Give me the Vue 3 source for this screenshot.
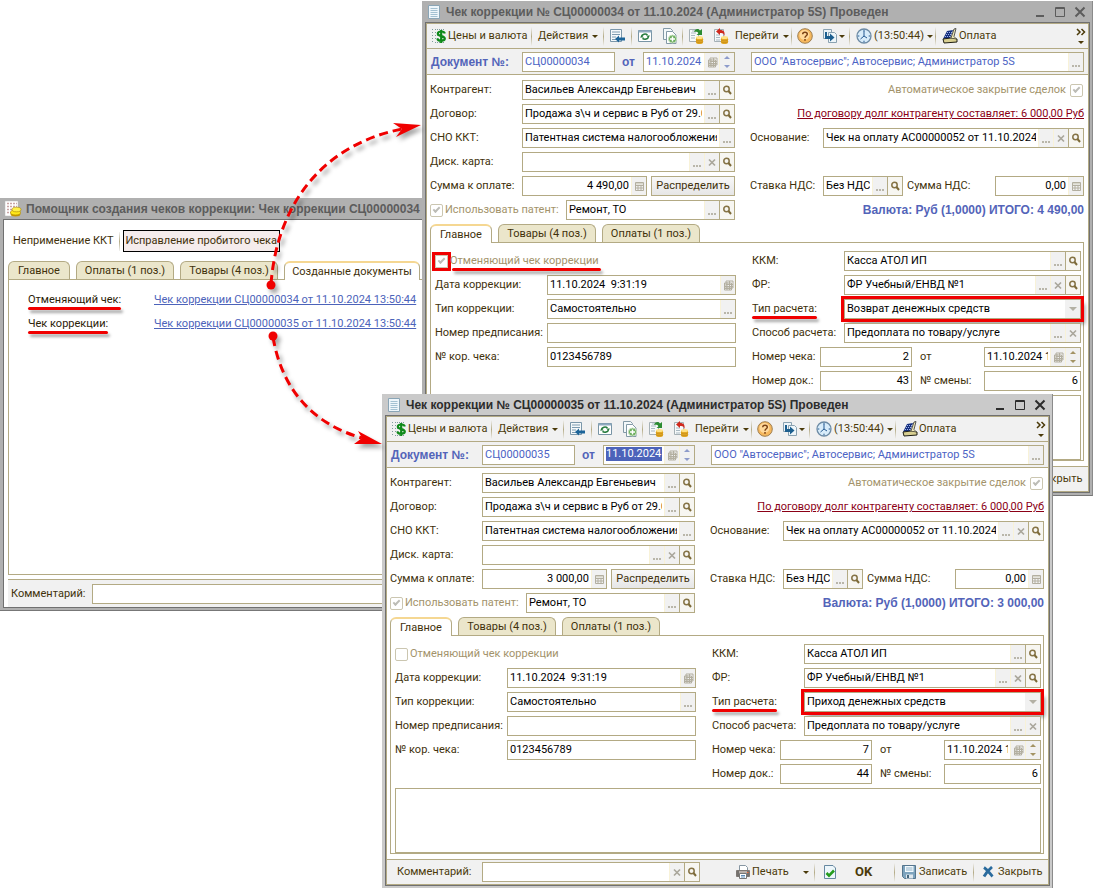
<script setup>
const docs = [
  {
    id: 'd34', number: 'СЦ00000034', active: false, sum: '4 490,00', cancelling: true,
    kind: 'Возврат денежных средств', check: '2', docNo: '43',
  },
  {
    id: 'd35', number: 'СЦ00000035', active: true, sum: '3 000,00', cancelling: false,
    kind: 'Приход денежных средств', check: '7', docNo: '44',
  },
]

const partyRows = [
  { key: 'party', label: 'Контрагент:', value: 'Васильев Александр Евгеньевич', buttons: ['dots', 'find'] },
  { key: 'contract', label: 'Договор:', value: 'Продажа з\\ч и сервис в Руб от 29.01.2024', buttons: ['dots', 'find'] },
  { key: 'tax', label: 'СНО ККТ:', value: 'Патентная система налогообложения', buttons: ['dots'] },
  { key: 'card', label: 'Диск. карта:', value: '', buttons: ['dots', 'clear', 'find'] },
]

const correctionRows = [
  { key: 'cdate', label: 'Дата коррекции:', value: '11.10.2024  9:31:19', buttons: ['cal'] },
  { key: 'ctype', label: 'Тип коррекции:', value: 'Самостоятельно', buttons: ['dots'] },
  { key: 'order', label: 'Номер предписания:', value: '', buttons: [] },
  { key: 'cnum', label: '№ кор. чека:', value: '0123456789', buttons: [] },
]

const registerRows = (doc) => [
  { key: 'kkm', label: 'ККМ:', value: 'Касса АТОЛ ИП', buttons: ['dots', 'find'] },
  { key: 'fr', label: 'ФР:', value: 'ФР Учебный/ЕНВД №1', buttons: ['dots', 'clear', 'find'] },
  { key: 'kind', label: 'Тип расчета:', value: doc.kind, select: true },
  { key: 'way', label: 'Способ расчета:', value: 'Предоплата по товару/услуге', buttons: ['dots', 'clear'] },
]

const names = { dots: 'Выбрать', find: 'Открыть', clear: 'Очистить', cal: 'Календарь', calc: 'Калькулятор' }
const docTabs = ['Главное', 'Товары (4 поз.)', 'Оплаты (1 поз.)']
const helperTabs = ['Главное', 'Оплаты (1 поз.)', 'Товары (4 поз.)', 'Созданные документы']
const created = [
  { label: 'Отменяющий чек:', text: 'Чек коррекции СЦ00000034 от 11.10.2024 13:50:44' },
  { label: 'Чек коррекции:', text: 'Чек коррекции СЦ00000035 от 11.10.2024 13:50:44' },
]
</script>

<template>
  <main class="desk">
    <svg class="sprite" aria-hidden="true">
      <symbol id="i-dots" viewBox="0 0 14 18"><path d="M3 12h2v2H3zM6 12h2v2H6zM9 12h2v2H9z" fill="#b9b6aa" /></symbol>
      <symbol id="i-clear" viewBox="0 0 14 18"><path d="M4 6.500l6 6M10 6.500l-6 6" stroke="#aaa79c" stroke-width="1.700" /></symbol>
      <symbol id="i-find" viewBox="0 0 14 18"><circle cx="6.500" cy="8" r="2.700" fill="none" stroke="#857345" stroke-width="1.500" /><path d="M8.500 10l2.500 3" stroke="#7d6a38" stroke-width="2" /></symbol>
      <symbol id="i-cal" viewBox="0 0 14 18"><path d="M5 5h7v7H5zM3.500 7h7v7h-7zM5 8.500h7M4 10.500h8M4 12.500h7M6 6v8M8.500 5v9" fill="none" stroke="#b3afa0" stroke-width="1" /></symbol>
      <symbol id="i-calc" viewBox="0 0 14 18"><path d="M3.500 5.500h8v8h-8zM3.500 8.500h8M3.500 11h8M6 8.500v5M9 8.500v5" fill="none" stroke="#b3afa0" stroke-width="1" /><path d="M4 6h7v1.500H4z" fill="#d8d6ca" /></symbol>
      <symbol id="i-doc" viewBox="0 0 16 16"><path d="M2.500 1.500h11v13h-11z" fill="#eef6fb" stroke="#8aa5b6" /><path d="M4.500 4.500h7M4.500 6.500h7M4.500 8.500h7M4.500 10.500h7M4.500 12.500h7" stroke="#a3c1d2" /></symbol>
      <symbol id="i-helper" viewBox="0 0 18 18"><path d="M1 1h13v15H1z" fill="#fff" stroke="#bbb" stroke-width=".5" /><path d="M3 3.500h10M3 6.500h10M3 9.500h6M3 12.500h4" stroke="#c9a5a5" stroke-width="1.500" stroke-dasharray="2 1" /><ellipse cx="11.500" cy="14" rx="5" ry="2.500" fill="#c79a00" /><ellipse cx="11.500" cy="12.500" rx="5" ry="2.500" fill="#ffe81a" stroke="#a68000" stroke-width=".6" /><ellipse cx="12.500" cy="9.500" rx="4.500" ry="2.300" fill="#fff14a" stroke="#a68000" stroke-width=".6" /></symbol>
      <symbol id="i-price" viewBox="0 0 16 16"><path d="M1 1.500h2M1 4.500h2M1 7.500h2M1 10.500h2M1 13.500h2M4 1.500h10M4 4.500h3M4 7.500h3M4 10.500h3M4 14.500h10" stroke="#7f9c9c" stroke-dasharray="1 1" /><path d="M13.800 5.500C13.500 3.800 12 3.500 10.200 3.500 8 3.500 6.800 4.200 6.800 5.800 6.800 8.800 13.800 7.400 13.800 10.600 13.800 12 12.200 12.800 10.200 12.800 8 12.800 6.700 12.200 6.400 10.500M10.200 2v13" fill="none" stroke="#0f8a1a" stroke-width="2.200" /></symbol>
      <symbol id="i-goto" viewBox="0 0 16 16"><path d="M1.500 1.500h11v12h-11z" fill="#f5f9fb" stroke="#7b97aa" /><path d="M3 4h8M3 6.500h8M3 9h4M3 11.500h4" stroke="#7d9bb0" /><path d="M6 11l4-3.500v2h6v3h-6v2z" fill="#1c6499" /></symbol>
      <symbol id="i-refresh" viewBox="0 0 16 16"><path d="M1.500 2.500h13v11h-13z" fill="#fff" stroke="#7894a5" /><path d="M1.500 2.500h13v2h-13z" fill="#8fabc0" /><path d="M4.500 8.500a3.500 3 0 0 1 6-1.500M11.500 8.500a3.500 3 0 0 1-6 1.800" fill="none" stroke="#247a3c" stroke-width="1.600" /><path d="M9 7.500h4L11.500 9.500zM7 9.500H3L4.500 7.500z" fill="#247a3c" /></symbol>
      <symbol id="i-copy" viewBox="0 0 16 16"><path d="M1.500 .500h7l2 2v9h-9z" fill="#f4f8fa" stroke="#8399a6" /><path d="M4.500 3.500h6l3.500 3.500v8.500h-9.500z" fill="#fff" stroke="#8399a6" /><circle cx="10.500" cy="11" r="4" fill="#67ab58" stroke="#c6e0be" /><path d="M10.500 8.500v5M8 11h5" stroke="#fff" stroke-width="1.500" /></symbol>
      <symbol id="i-post" viewBox="0 0 16 16"><path d="M1.500 1.500h9v12h-9z" fill="#f6f9fa" stroke="#a5b0b5" /><path d="M3 5h5M3 7.500h4M3 10h4M4 3h3" stroke="#a9b9c2" /><path d="M6 4c1-3 4-4 6-1.500L14 1v6H8.500l2-1.800C9.500 3.800 8 3.500 6 4z" fill="#2b8b31" /><path d="M8 9.500v5c0 2 7 2 7 0v-5z" fill="#e4aa25" /><ellipse cx="11.500" cy="9.500" rx="3.500" ry="1.500" fill="#ffe285" /><path d="M8 11.500c0 1.800 7 1.800 7 0M8 13.500c0 1.500 7 1.500 7 0" fill="none" stroke="#b98010" stroke-width=".6" /></symbol>
      <symbol id="i-unpost" viewBox="0 0 16 16"><path d="M1.500 1.500h9v12h-9z" fill="#f6f9fa" stroke="#a5b0b5" /><path d="M3 7h4M3 9.500h4M3 12h4" stroke="#a9b9c2" /><path d="M3 3.500L7 0v2c4 0 5 2 4.500 6C10.500 5 9.500 4.800 7 5v2z" fill="#cf281c" /><path d="M8 9.500v5c0 2 7 2 7 0v-5z" fill="#e4aa25" /><ellipse cx="11.500" cy="9.500" rx="3.500" ry="1.500" fill="#ffe285" /><path d="M8 11.500c0 1.800 7 1.800 7 0M8 13.500c0 1.500 7 1.500 7 0" fill="none" stroke="#b98010" stroke-width=".6" /></symbol>
      <symbol id="i-help" viewBox="0 0 16 16"><circle cx="8" cy="8" r="7.300" fill="#f6b85e" stroke="#9f7f50" /><circle cx="7.500" cy="7" r="5" fill="#ffd99b" /><path d="M5.700 6.200C5.700 3.500 10.300 3.500 10.300 6.200 10.300 7.800 8 7.800 8 9.800M8 11v1.700" fill="none" stroke="#7b4215" stroke-width="1.500" /></symbol>
      <symbol id="i-based" viewBox="0 0 16 16"><path d="M1.500 1.500h8v9h-8z" fill="#eef4f8" stroke="#8aa2b1" /><path d="M6.500 4.500h6l2 2v8h-8z" fill="#eef6fa" stroke="#8aa2b1" /><path d="M3 4h2v4h3V5.500l4.500 4L8 13.500v-2.500H3z" fill="#1d5f8f" /></symbol>
      <symbol id="i-clock" viewBox="0 0 16 16"><circle cx="8" cy="8" r="7" fill="#d8ecfa" stroke="#6d8ba5" stroke-width="1.300" /><path d="M8 3v5l3 2M8 1.800v1.500M8 12.700v1.500M1.800 8h1.500M12.700 8h1.500M8 8l-3.500 3" fill="none" stroke="#265a91" /></symbol>
      <symbol id="i-pay" viewBox="0 0 16 16"><path d="M5 3l6-1-3 8-7 1z" fill="#16307e" /><path d="M5 4.500h5M4 6.500h5M3 8.500h5" stroke="#9db1ec" stroke-dasharray="1 1" /><path d="M1 11l8-1 6 1v3l-13 1z" fill="#d8cf91" stroke="#1e1e14" /><path d="M9 10l3-9 2-.5-2 8 2 2" fill="#eee7b8" stroke="#333" stroke-width=".8" /></symbol>
      <symbol id="i-print" viewBox="0 0 16 16"><path d="M4.500 1.500h6l2 2v4h-8z" fill="#fff" stroke="#8796a2" /><path d="M1.500 6.500h13v6h-13z" fill="#b8b0aa" stroke="#7d7773" /><path d="M2 7h2v5H2zM12 7h2v5h-2z" fill="#75716e" /><path d="M4.500 9.500h7v5h-7z" fill="#fff" stroke="#767676" /><path d="M6 11.500h4M6 13h4" stroke="#5e8db8" /><path d="M12 8h1.500v1H12z" fill="#f06b3e" /></symbol>
      <symbol id="i-ok" viewBox="0 0 16 16"><path d="M2.500 1.500h8.500l2.500 2.500v10.500h-11z" fill="#edf6fb" stroke="#6688a0" /><path d="M4.500 9l2.500 2.700 5-5.200" fill="none" stroke="#259c1e" stroke-width="2.600" /></symbol>
      <symbol id="i-save" viewBox="0 0 16 16"><path d="M1.500 1.500h13v13h-11l-2-2z" fill="#7da3bd" stroke="#54758d" /><path d="M4 2h8.500v6H4z" fill="#f3fafe" /><path d="M5 4h6.500M5 6h6.500" stroke="#8fb1c7" /><path d="M5 10.500h7v4H5z" fill="#dfe7ec" /><path d="M6 11h2v3H6z" fill="#45667c" /></symbol>
      <symbol id="i-close" viewBox="0 0 12 12"><path d="M2 1.500c3 2 6 6 8.500 9M10 1c-3 2.500-6 6-8 9.500" fill="none" stroke="#2a6b9d" stroke-width="2.800" /></symbol>
    </svg>

    <section class="win helper" aria-label="Помощник создания чеков коррекции">
      <header class="title">
        <svg class="ico18"><use href="#i-helper" /></svg>
        <h2>Помощник создания чеков коррекции: Чек коррекции СЦ00000034</h2>
      </header>
      <div class="helper-frame">
        <div class="modes">
          <button type="button" class="mode">Неприменение ККТ</button>
          <i class="sep"></i>
          <button type="button" class="mode pressed">Исправление пробитого чека</button>
        </div>
        <nav class="tabs">
          <button v-for="(t, i) in helperTabs" :key="t" type="button" class="tab" :class="{ on: i === 3, short: i === 0, long: i === 3 }">{{ t }}</button>
        </nav>
        <div class="created">
          <p v-for="c in created" :key="c.label">
            <span><b class="marked">{{ c.label }}</b></span>
            <a href="#">{{ c.text }}</a>
          </p>
        </div>
        <footer class="helper-foot">
          <label for="helper-note">Комментарий:</label>
          <span class="field"><input id="helper-note" type="text" /></span>
        </footer>
      </div>
    </section>

    <section v-for="doc in docs" :key="doc.id" class="win doc" :class="[doc.id, { active: doc.active }]">
      <header class="title">
        <svg class="ico"><use href="#i-doc" /></svg>
        <h2>Чек коррекции № {{ doc.number }} от 11.10.2024 (Администратор 5S) Проведен</h2>
        <div class="wbtns">
          <button type="button" aria-label="Свернуть"><svg viewBox="0 0 12 12"><path d="M2 10h8" /></svg></button>
          <button type="button" aria-label="Развернуть"><svg viewBox="0 0 12 12"><path d="M1.500 1.500h9v9h-9zM1 2.500h10" class="thin" /></svg></button>
          <button type="button" aria-label="Закрыть"><svg viewBox="0 0 12 12"><path d="M1.500 1.500l9 9M10.500 1.500l-9 9" /></svg></button>
        </div>
      </header>

      <div class="frame">
        <div class="tools">
          <button type="button" class="tool prices"><svg class="ico"><use href="#i-price" /></svg>Цены и валюта</button>
          <i class="sep"></i>
          <button type="button" class="tool acts">Действия<i class="caret"></i></button>
          <i class="sep"></i>
          <button type="button" class="tool pic wide" aria-label="Найти в списке"><svg class="ico"><use href="#i-goto" /></svg></button>
          <i class="sep"></i>
          <button type="button" class="tool pic" aria-label="Обновить"><svg class="ico"><use href="#i-refresh" /></svg></button>
          <button type="button" class="tool pic" aria-label="Скопировать"><svg class="ico"><use href="#i-copy" /></svg></button>
          <i class="sep"></i>
          <button type="button" class="tool pic" aria-label="Провести"><svg class="ico"><use href="#i-post" /></svg></button>
          <button type="button" class="tool pic" aria-label="Отменить проведение"><svg class="ico"><use href="#i-unpost" /></svg></button>
          <button type="button" class="tool go">Перейти<i class="caret"></i></button>
          <i class="sep"></i>
          <button type="button" class="tool pic" aria-label="Справка"><svg class="ico"><use href="#i-help" /></svg></button>
          <button type="button" class="tool based" aria-label="Ввести на основании"><svg class="ico"><use href="#i-based" /></svg><i class="caret"></i></button>
          <i class="sep"></i>
          <button type="button" class="tool time"><svg class="ico"><use href="#i-clock" /></svg>(13:50:44)<i class="caret"></i></button>
          <i class="sep"></i>
          <button type="button" class="tool pay"><svg class="ico"><use href="#i-pay" /></svg>Оплата</button>
          <button type="button" class="tool more" aria-label="Ещё"><svg viewBox="0 0 10 18"><path d="M1 2l3 3-3 3M5.500 2l3 3-3 3" fill="none" stroke="#4b3a0a" stroke-width="1.500" /><path d="M2 14h6L5 17z" fill="#4b3a0a" /></svg></button>
        </div>

        <div class="head">
          <label class="strong lab" :for="doc.id + 'num'">Документ №:</label>
          <span class="field num"><input :id="doc.id + 'num'" type="text" :value="doc.number" /></span>
          <label class="strong ot" :for="doc.id + 'date'">от</label>
          <span class="field date">
            <span v-if="doc.active" class="picked"><input :id="doc.id + 'date'" type="text" value="11.10.2024" /></span>
            <input v-else :id="doc.id + 'date'" type="text" value="11.10.2024" />
            <button type="button" class="plain" aria-label="Календарь"><svg><use href="#i-cal" /></svg></button>
            <button type="button" class="spin" aria-label="Изменить дату"><i></i><i></i></button>
          </span>
          <span class="field org">
            <input type="text" aria-label="Организация" value='ООО "Автосервис"; Автосервис; Администратор 5S' />
            <button type="button" aria-label="Выбрать"><svg><use href="#i-dots" /></svg></button>
          </span>
        </div>

        <div class="body">
          <div class="cols">
            <div class="left">
              <div v-for="r in partyRows" :key="r.key" class="row">
                <label class="lab" :for="doc.id + r.key">{{ r.label }}</label>
                <span class="field grow">
                  <input :id="doc.id + r.key" type="text" :value="r.value" />
                  <button v-for="b in r.buttons" :key="b" type="button" :class="b" :aria-label="names[b]"><svg><use :href="'#i-' + b" /></svg></button>
                </span>
              </div>
              <div class="row">
                <label class="lab" :for="doc.id + 'sum'">Сумма к оплате:</label>
                <span class="field grow">
                  <input :id="doc.id + 'sum'" class="right" type="text" :value="doc.sum" />
                  <button type="button" aria-label="Калькулятор"><svg><use href="#i-calc" /></svg></button>
                </span>
                <button type="button" class="split">Распределить</button>
              </div>
              <div class="row">
                <label class="check patent"><input type="checkbox" checked disabled />Использовать патент:</label>
                <span class="field grow">
                  <input type="text" aria-label="Патент" value="Ремонт, ТО" />
                  <button type="button" aria-label="Выбрать"><svg><use href="#i-dots" /></svg></button>
                  <button type="button" class="find" aria-label="Открыть"><svg><use href="#i-find" /></svg></button>
                </span>
              </div>
            </div>

            <div class="right-col">
              <div class="row end"><label class="check">Автоматическое закрытие сделок<input type="checkbox" checked disabled /></label></div>
              <div class="row end"><a href="#" class="debt">По договору долг контрагенту составляет: 6 000,00 Руб</a></div>
              <div class="row">
                <label class="lab2" :for="doc.id + 'base'">Основание:</label>
                <span class="field grow">
                  <input :id="doc.id + 'base'" type="text" value="Чек на оплату АС00000052 от 11.10.2024" />
                  <button v-for="b in ['dots', 'clear', 'find']" :key="b" type="button" :class="b" :aria-label="names[b]"><svg><use :href="'#i-' + b" /></svg></button>
                </span>
              </div>
              <div class="row"></div>
              <div class="row">
                <label class="lab2" :for="doc.id + 'vat'">Ставка НДС:</label>
                <span class="field vat">
                  <input :id="doc.id + 'vat'" type="text" value="Без НДС" />
                  <button v-for="b in ['dots', 'find']" :key="b" type="button" :class="b" :aria-label="names[b]"><svg><use :href="'#i-' + b" /></svg></button>
                </span>
                <label class="vat-lab" :for="doc.id + 'vsum'">Сумма НДС:</label>
                <span class="field vsum">
                  <input :id="doc.id + 'vsum'" class="right" type="text" value="0,00" />
                  <button type="button" aria-label="Калькулятор"><svg><use href="#i-calc" /></svg></button>
                </span>
              </div>
              <div class="row end"><strong class="strong">Валюта: Руб (1,0000) ИТОГО: {{ doc.sum }}</strong></div>
            </div>
          </div>

          <nav class="tabs">
            <button v-for="(t, i) in docTabs" :key="t" type="button" class="tab" :class="{ on: i === 0, short: i === 0 }">{{ t }}</button>
          </nav>
          <div class="panel">
            <div class="cols">
              <div class="pleft">
                <div class="row"><label class="check" :class="{ flagged: doc.cancelling }"><input type="checkbox" :checked="doc.cancelling" disabled /><span>Отменяющий чек коррекции</span></label></div>
                <div v-for="r in correctionRows" :key="r.key" class="row">
                  <label class="lab3" :for="doc.id + r.key">{{ r.label }}</label>
                  <span class="field grow">
                    <input :id="doc.id + r.key" type="text" :value="r.value" />
                    <button v-for="b in r.buttons" :key="b" type="button" :class="b" :aria-label="names[b]"><svg><use :href="'#i-' + b" /></svg></button>
                  </span>
                </div>
              </div>
              <div class="pright">
                <div v-for="r in registerRows(doc)" :key="r.key" class="row">
                  <label class="lab4" :for="doc.id + r.key"><span :class="{ marked: r.select }">{{ r.label }}</span></label>
                  <span v-if="r.select" class="field grow ringed">
                    <select :id="doc.id + r.key"><option>{{ r.value }}</option></select>
                    <i class="drop"></i>
                  </span>
                  <span v-else class="field grow">
                    <input :id="doc.id + r.key" type="text" :value="r.value" />
                    <button v-for="b in r.buttons" :key="b" type="button" :class="b" :aria-label="names[b]"><svg><use :href="'#i-' + b" /></svg></button>
                  </span>
                </div>
                <div class="row">
                  <label class="lab5" :for="doc.id + 'chk'">Номер чека:</label>
                  <span class="field short-num"><input :id="doc.id + 'chk'" class="right" type="text" :value="doc.check" /></span>
                  <label class="lab6" :for="doc.id + 'chd'">от</label>
                  <span class="field grow">
                    <input :id="doc.id + 'chd'" type="text" value="11.10.2024 13:50:44" />
                    <button type="button" class="plain" aria-label="Календарь"><svg><use href="#i-cal" /></svg></button>
                    <button type="button" class="spin" aria-label="Изменить дату"><i></i><i></i></button>
                  </span>
                </div>
                <div class="row">
                  <label class="lab5" :for="doc.id + 'dno'">Номер док.:</label>
                  <span class="field short-num"><input :id="doc.id + 'dno'" class="right" type="text" :value="doc.docNo" /></span>
                  <label class="lab6" :for="doc.id + 'shift'">№ смены:</label>
                  <span class="field grow"><input :id="doc.id + 'shift'" class="right" type="text" value="6" /></span>
                </div>
              </div>
            </div>
            <textarea class="memo" aria-label="Описание"></textarea>
          </div>
        </div>

        <footer class="foot">
          <label class="foot-lab" :for="doc.id + 'note'">Комментарий:</label>
          <span class="field grow">
            <input :id="doc.id + 'note'" type="text" />
            <button v-for="b in ['clear', 'find']" :key="b" type="button" :class="b" :aria-label="names[b]"><svg><use :href="'#i-' + b" /></svg></button>
          </span>
          <div class="foot-btns">
            <button type="button" class="tool print"><svg class="ico"><use href="#i-print" /></svg>Печать<i class="caret"></i></button>
            <i class="sep"></i>
            <button type="button" class="tool okb"><svg class="ico"><use href="#i-ok" /></svg><b>OK</b></button>
            <i class="sep"></i>
            <button type="button" class="tool save"><svg class="ico"><use href="#i-save" /></svg>Записать</button>
            <i class="sep"></i>
            <button type="button" class="tool closeb"><svg class="ico12"><use href="#i-close" /></svg>Закрыть</button>
          </div>
        </footer>
      </div>
    </section>

    <svg class="arrows" viewBox="0 0 430 460" aria-hidden="true">
      <g fill="none" stroke="#f00000" stroke-width="3" stroke-dasharray="9 5">
        <path d="M271 284C277 205 322 145 402 129" />
        <path d="M273 337C282 390 313 424 362 438" />
      </g>
      <g fill="#f00000">
        <circle cx="271" cy="285" r="4.500" />
        <circle cx="273" cy="336" r="4.500" />
        <path d="M421 125L393 123L402 129L396 137z" />
        <path d="M382 444L358 431L362 438L354 444z" />
      </g>
    </svg>
  </main>
</template>

<style>
body { background: #fff; }
</style>

<style scoped>
.desk { position: relative; min-height: 888px; overflow: hidden; font: 11px/14px Roboto, "Liberation Sans", sans-serif; color: #41310b; }
.desk *, .desk *::after { box-sizing: border-box; }
.sprite { position: absolute; width: 0; height: 0; }
button, input, select, textarea { font: inherit; color: inherit; margin: 0; padding: 0; border: 0; background: none; border-radius: 0; outline: 0; }
h2, p { margin: 0; font-size: inherit; }
button { white-space: nowrap; }
label { white-space: nowrap; flex: none; }

.win { position: absolute; display: flex; flex-direction: column; background: #b0b0b0; padding: 0 3px 2px; border-bottom: 1px solid #777; }
.helper { left: 0; top: 198px; width: 440px; }
.doc { width: 671px; border-right: 1px solid #8b8b8b; padding-right: 2px; }
.d34 { left: 422px; top: 1px; }
.d35 { left: 382px; top: 394px; }
.active { background: #cacaca; }
.title { display: flex; align-items: center; height: 21px; padding: 1px 0 0 1px; gap: 4px; color: #5c5c5c; }
.title h2 { flex: 1; font: bold 12px/16px "Liberation Sans", Roboto, sans-serif; white-space: nowrap; overflow: hidden; }
.active .title { color: #2c2c2c; }
.wbtns { display: flex; gap: 8px; padding-right: 4px; }
.wbtns button { width: 12px; height: 12px; }
.wbtns svg { display: block; width: 12px; height: 12px; fill: none; stroke: currentColor; stroke-width: 2; }
.wbtns .thin { stroke-width: 1; }
.ico { width: 16px; height: 16px; flex: none; }
.ico18 { width: 18px; height: 18px; flex: none; }
.ico12 { width: 12px; height: 12px; flex: none; }

.frame { border: 1px solid #707070; background: #b3aa84; padding: 1px; }
.tools { display: flex; align-items: center; height: 25px; padding: 0 2px 0 4px; background: #f1f1f1; border-bottom: 1px solid #b3aa84; color: #4b3a0a; }
.tool { display: flex; align-items: center; flex: none; }
.sep { flex: none; width: 1px; height: 19px; background: linear-gradient(#f1f1f1, #b5ac88, #f1f1f1); }
.caret { flex: none; border: 3px solid transparent; border-top: 3px solid #4b3a0a; border-bottom: 0; margin-left: 4px; }
.prices { width: 100px; gap: 1px; }
.acts { width: 71px; padding-left: 6px; }
.pic { width: 25px; padding-left: 5px; }
.wide { width: 27px; }
.go { width: 58px; padding-left: 2px; }
.based { width: 32px; padding-left: 5px; }
.based .caret, .time .caret { margin-left: 1px; }
.time { width: 85px; padding-left: 6px; gap: 2px; }
.pay { padding-left: 6px; gap: 1px; }
.more { margin-left: auto; }
.more svg { width: 10px; height: 18px; display: block; }

.head { display: flex; align-items: center; height: 26px; padding: 0 4px; background: #f1f1f1; border-bottom: 1px solid #b3aa84; }
.strong { font: bold 12px/14px "Liberation Sans", Roboto, sans-serif; color: #5364b9; }
.head input { color: #4c63c4; }
.lab { width: 92px; }
.head .lab { width: 91px; }
.num { width: 93px; }
.ot { width: 28px; padding-left: 7px; }
.date { width: 92px; }
.org { flex: 1; margin-left: 16px; }
.picked { flex: 1; min-width: 0; padding: 1px 0 1px 2px; }
.picked input { height: 14px; background: #4c63ba; color: #fff; display: block; }

.field { display: flex; height: 20px; min-width: 0; border: 1px solid #b3aa84; background: #fff; color: #000; }
.field input, .field select { flex: 1; min-width: 0; width: 0; padding: 0 2px; appearance: none; white-space: pre; }
.field .picked input { flex: none; width: 56px; padding: 0; }
.field .right { text-align: right; }
.field button { flex: none; width: 15px; border-left: 1px solid #f8f2d8; background: #f1f1f1; }
.field button.find { border-left: 1px solid #b3aa84; background: #f7f6f1; }
.field svg { display: block; width: 14px; height: 18px; }
.field .spin { display: flex; flex-direction: column; align-items: center; justify-content: space-between; padding: 3px 0; }
.spin i { border: 3px solid transparent; border-bottom: 3px solid #a39364; border-top: 0; }
.spin i + i { border-top: 3px solid #a39364; border-bottom: 0; }
.head .spin i { border-bottom-color: #8d9bcb; }
.head .spin i + i { border-top-color: #8d9bcb; }
.drop { width: 15px; background: #f1f1f1; display: flex; align-items: center; justify-content: center; }
.drop::after { content: ""; border: 4px solid transparent; border-top: 4px solid #b3b0a4; border-bottom: 0; }
.grow { flex: 1; }

.body { padding: 5px 4px 5px 3px; background: #fff; }
.cols { display: flex; }
.left, .right-col, .pleft, .pright { display: flex; flex-direction: column; gap: 4px; }
.left { width: 305px; }
.right-col { flex: 1; margin-left: 15px; }
.row { display: flex; align-items: center; height: 20px; }
.end { justify-content: flex-end; }
.split { width: 84px; height: 20px; margin-left: 4px; border: 1px solid #b3aa84; background: linear-gradient(#f8f8f8, #e6e6e6); color: #41310b; }
.check { display: flex; align-items: center; gap: 2px; color: #a3936b; }
.check input { appearance: none; width: 13px; height: 13px; border: 1px solid #cbc6b0; border-radius: 2px; background: #fff; flex: none; }
.check input:checked::after { content: ""; display: block; width: 7px; height: 4px; margin: 2px; border: solid #bcbcb6; border-width: 0 0 2px 2px; transform: rotate(-45deg); }
.patent { width: 136px; }
.end .check { gap: 4px; padding-right: 1px; }
.debt { color: #8b0016; text-decoration: underline; }
.lab2 { width: 73px; }
.vat { width: 80px; }
.vat-lab { padding-left: 4px; flex: 1; }
.vsum { width: 89px; }

.tabs { display: flex; gap: 6px; margin-top: 4px; }
.tab { height: 18px; width: 98px; border: 1px solid #b3aa84; border-bottom: 0; border-radius: 6px 6px 0 0; background: #ebe6cb; color: #41310b; }
.tab.short { width: 62px; }
.tab.long { width: 136px; }
.tab.on { height: 19px; margin-bottom: -1px; background: #fff; border-top: 2px solid #f5d792; position: relative; }
.panel { border: 1px solid #b3aa84; padding: 8px 2px 0 4px; }
.pleft { width: 301px; }
.pright { flex: 1; margin-left: 16px; }
.lab3 { width: 112px; }
.lab4 { width: 92px; }
.lab5 { width: 68px; }
.short-num { width: 92px; }
.lab6 { width: 72px; padding-left: 8px; }
.memo { display: block; width: 100%; height: 65px; margin-top: 4px; border: 1px solid #b3aa84; resize: none; }

.marked { position: relative; font-weight: normal; display: inline-block; }
.marked::after { content: ""; position: absolute; left: 0; right: 0; bottom: -3px; height: 3px; border-radius: 2px; background: #f00000; box-shadow: 2px 3px 3px rgba(0, 0, 0, .35); }
.ringed { outline: 3px solid #f00000; box-shadow: 4px 5px 4px rgba(0, 0, 0, .4); }
.flagged input { outline: 3px solid #f00000; border-radius: 0; }
.flagged span { position: relative; }
.flagged span::after { content: ""; position: absolute; left: 2px; right: -2px; bottom: -3px; height: 3px; border-radius: 2px; background: #f00000; box-shadow: 2px 3px 3px rgba(0, 0, 0, .35); }

.foot { display: flex; align-items: center; height: 25px; background: #f1f1f1; border-top: 1px solid #b3aa84; padding: 0 6px 0 10px; color: #4b3a0a; }
.foot-lab { width: 85px; }
.foot-btns { display: flex; align-items: center; margin-left: 35px; }
.print { width: 79px; gap: 1px; }
.print .caret { margin-left: auto; margin-right: 5px; }
.okb { width: 79px; padding-left: 7px; gap: 17px; font-size: 13px; }
.save { width: 78px; padding-left: 6px; gap: 2px; }
.closeb { width: 68px; padding-left: 8px; gap: 4px; }

.helper-frame { border: 1px solid #707070; background: #fff; height: 389px; padding: 10px 0 0 4px; display: flex; flex-direction: column; }
.modes { display: flex; align-items: center; height: 22px; }
.mode { height: 22px; padding: 0 5px; }
.mode.pressed { width: 157px; margin-left: 3px; padding: 0; border: 1px solid #000; background: #f5ecec; }
.helper .tabs { margin-top: 9px; }
.created { flex: 1; border: 1px solid #b3aa84; border-right: 0; padding: 8px 0 0 19px; }
.created p { display: flex; align-items: center; height: 24px; }
.created span { width: 126px; flex: none; color: #2b2107; }
.created a { color: #4c63ba; text-decoration: underline; white-space: nowrap; }
.helper-foot { display: flex; align-items: center; height: 28px; margin-top: 4px; padding-left: 3px; border-top: 1px solid #b3aa84; background: #f1f1f1; }
.helper-foot label { width: 81px; }
.helper-foot .field { flex: 1; }

.arrows { position: absolute; left: 0; top: 0; width: 430px; height: 460px; pointer-events: none; filter: drop-shadow(3px 4px 2px rgba(0, 0, 0, .35)); }
</style>
